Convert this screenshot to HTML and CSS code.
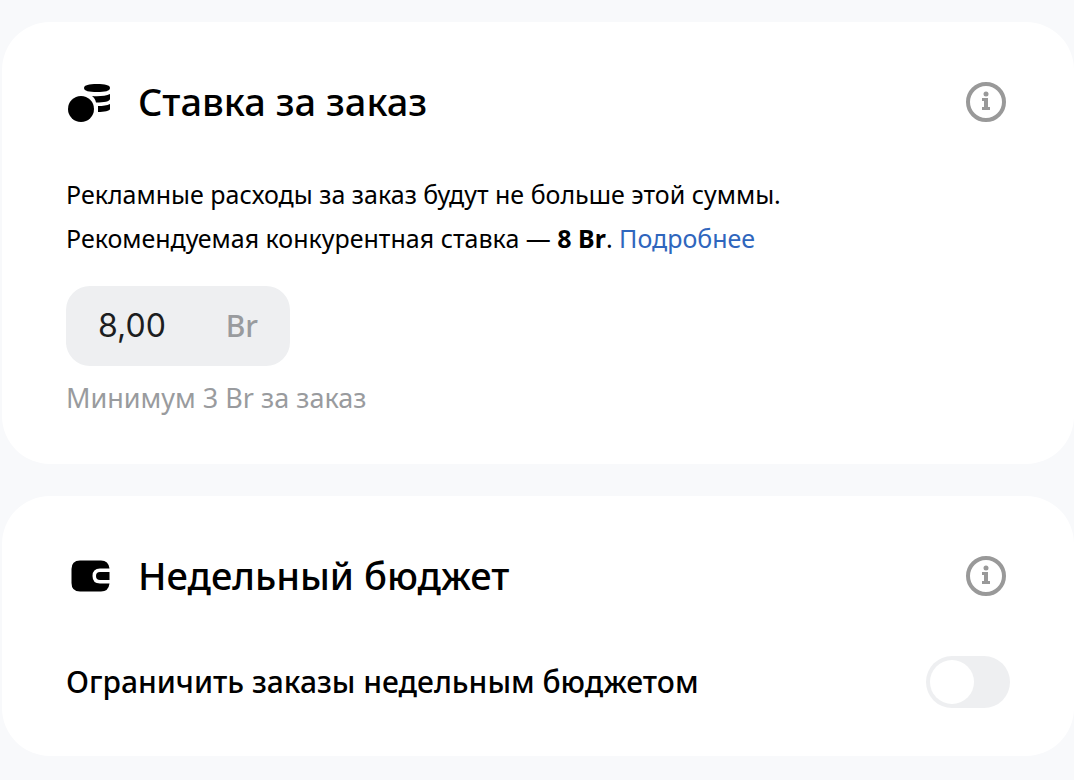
FILE: index.html
```html
<!DOCTYPE html>
<html lang="ru">
<head>
  <meta charset="UTF-8">
  <meta name="viewport" content="width=device-width, initial-scale=1.0">
  <title>Ставка и бюджет</title>
  <link rel="stylesheet" href="styles.css">
</head>
<body>

<main class="page">
  <section class="card">
    <header class="card-header">
      <svg class="card-icon" viewBox="0 0 48 48" aria-hidden="true">
        <circle cx="15" cy="31" r="13"/>
        <path d="M18 10C18 7 23 6 31 6S44 7 44 10S39 14 31 14S18 13 18 10Z"/>
        <path d="M26 18C33 18.500 40 18 44 16V21C44 23.500 38 24.500 30 24.500C29.500 21.500 28 19.500 26 18Z"/>
        <path d="M32 28C37 28 41 27.500 44 26V31C44 33 38 34 32 34Z"/>
      </svg>
      <h2>Ставка за заказ</h2>
      <button class="info" type="button" aria-label="Подсказка о ставке">
        <svg viewBox="0 0 48 48" aria-hidden="true">
          <circle class="ring" cx="24" cy="24" r="18"/>
          <circle cx="24" cy="16" r="2.500"/>
          <path d="M20 20H26V29H28V32H20V29H22V23H20Z"/>
        </svg>
      </button>
    </header>

    <p class="text">Рекламные расходы за заказ будут не больше этой суммы.<br>
    Рекомендуемая конкурентная ставка — <strong>8 Br</strong>. <a href="#">Подробнее</a></p>

    <div class="field">
      <input id="bid" type="text" value="8,00" aria-label="Ставка за заказ" aria-describedby="bid-hint">
      <label for="bid">Br</label>
    </div>
    <p class="hint" id="bid-hint">Минимум 3 Br за заказ</p>
  </section>

  <section class="card">
    <header class="card-header">
      <svg class="card-icon" viewBox="0 0 48 48" aria-hidden="true">
        <path d="M14 8.500H35Q42.500 8.500 43.500 16.500H34Q26.500 16.500 26.500 24T34 31.500H43.500Q42.500 39.500 35 39.500H14Q5.500 39.500 5.500 31V17Q5.500 8.500 14 8.500Z"/>
        <path d="M34 20H43.500V28H34Q30 28 30 24T34 20Z"/>
      </svg>
      <h2>Недельный бюджет</h2>
      <button class="info" type="button" aria-label="Подсказка о бюджете">
        <svg viewBox="0 0 48 48" aria-hidden="true">
          <circle class="ring" cx="24" cy="24" r="18"/>
          <circle cx="24" cy="16" r="2.500"/>
          <path d="M20 20H26V29H28V32H20V29H22V23H20Z"/>
        </svg>
      </button>
    </header>

    <div class="limit">
      <label for="limit">Ограничить заказы недельным бюджетом</label>
      <input class="toggle" id="limit" type="checkbox" role="switch">
    </div>
  </section>
</main>

</body>
</html>
```
FILE: styles.css
```css
* {
  box-sizing: border-box;
}
body {
  margin: 0;
  background-color: #f8f9fb;
  color: #000;
  font-family: "Noto Sans", "Open Sans", sans-serif;
}
.page {
  display: flex;
  flex-direction: column;
  gap: 32px;
  padding: 22px 0 24px 2px;
}
.card {
  background-color: #fff;
  border-radius: 48px;
  padding: 56px 64px 48px;
}
.card-header {
  display: flex;
  align-items: center;
  gap: 24px;
}
.card-icon {
  width: 48px;
  height: 48px;
  flex-shrink: 0;
}
h2 {
  flex-grow: 1;
  margin: 0;
  padding-bottom: 2px;
  font-size: 38px;
  font-weight: 500;
  line-height: 46px;
}
.info {
  width: 48px;
  height: 48px;
  padding: 0;
  border: none;
  background: none;
  cursor: pointer;
}
.info svg {
  display: block;
  fill: #999;
}
.info .ring {
  fill: none;
  stroke: #999;
  stroke-width: 4;
}
.text {
  margin: 46px 0 26px;
  font-size: 25px;
  line-height: 44px;
}
.text a {
  color: #2f66bd;
  text-decoration: none;
}
.text a:hover {
  text-decoration: underline;
}
.field {
  display: flex;
  align-items: center;
  width: 224px;
  height: 80px;
  padding: 0 32px;
  border-radius: 24px;
  background-color: #eeeff1;
}
.field input {
  flex: 1;
  min-width: 0;
  padding: 0 0 2px;
  border: none;
  outline: none;
  background: none;
  color: #1c1d20;
  font-family: Inter, sans-serif;
  font-size: 32px;
}
.field label {
  padding-bottom: 2px;
  color: #999b9e;
  font-size: 30px;
  font-weight: 500;
}
.hint {
  margin: 15px 0 0;
  padding-bottom: 1px;
  color: #999b9e;
  font-size: 27px;
  line-height: 34px;
}
.limit {
  display: flex;
  align-items: center;
  justify-content: space-between;
  margin-top: 56px;
}
.limit label {
  padding-bottom: 2px;
  font-size: 30px;
  font-weight: 500;
}
.toggle {
  appearance: none;
  flex-shrink: 0;
  width: 84px;
  height: 52px;
  margin: 0;
  padding: 4px;
  border-radius: 26px;
  background-color: #eeeff1;
  cursor: pointer;
}
.toggle::before {
  content: "";
  display: block;
  width: 44px;
  height: 44px;
  border-radius: 50%;
  background-color: #fff;
}
.toggle:checked {
  background-color: #2f66bd;
}
.toggle:checked::before {
  margin-left: auto;
}
```
